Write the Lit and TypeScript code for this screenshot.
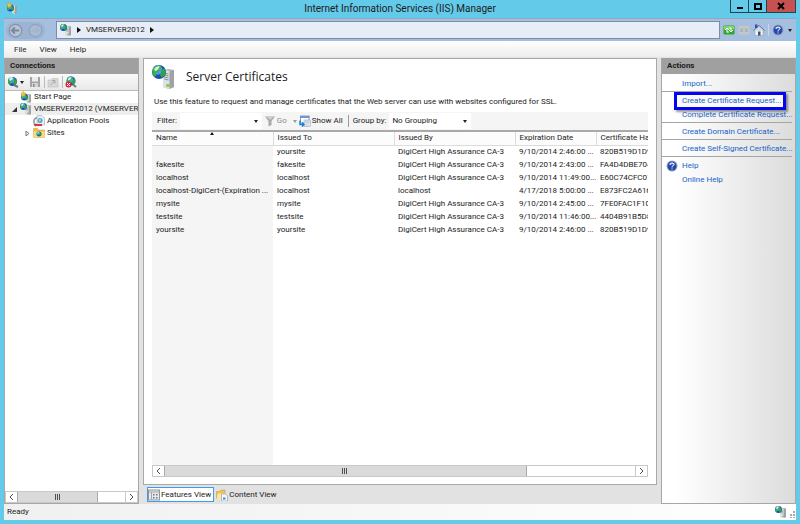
import { LitElement, html, css, svg, nothing } from "lit";
import { customElement, property, state } from "lit/decorators.js";
import { classMap } from "lit/directives/class-map.js";

const globe = (x: number, y: number, r: number) => svg`
  <g transform="translate(${x} ${y}) scale(${r / 10})">
    <circle r="10" fill="#1c4fb4"/>
    <circle cx="-2" cy="-3" r="7" fill="#4f98ea"/>
    <path d="M-9 -3C-7 -8 -2 -10 2 -9L4 -6L0 -4L-1 0L-5 1L-4 5L-6 7C-9 4 -10 0 -9 -3Z" fill="#35b53c"/>
    <path d="M3 -3L8 -5C10 -2 10 2 8 5L4 8L1 4L4 1Z" fill="#2fa63a"/>
    <path d="M-7 -4C-5 -8 -1 -9 1 -8L-1 -4L-5 -1Z" fill="#d9f7d2"/>
  </g>`;
const server = (x: number, y: number, w: number, h: number) => svg`
  <g transform="translate(${x} ${y}) scale(${w / 10} ${h / 20})">
    <path d="M0 1L5 0L10 1V18L5 20L0 18Z" fill="#b4babe"/>
    <path d="M0 1L6 2V20L0 18Z" fill="#dfe2e4"/>
    <path d="M6 2L10 1V18L6 20Z" fill="#9da3a8"/>
    <path d="M1 4L5 5M1 6L5 7M1 8L5 9M1 10L5 11" stroke="#8b9399" stroke-width="1"/>
    <rect x="3" y="15" width="3" height="3" fill="#8fc850"/>
  </g>`;
const star = svg`<path d="M5 0L6.500 3L10 3.500L7.500 6L8 9.500L5 8L2 9.500L2.500 6L0 3.500L3.500 3Z" fill="#f5c431" stroke="#c98a12" stroke-width=".5"/>`;

const icons: Record<string, unknown> = {
  iis: svg`${server(11, 4, 11, 20)}${globe(7, 7, 7)}`,
  start: svg`${server(12, 6, 10, 18)}${globe(9, 12, 7)}<g transform="translate(1 0) scale(1.1)">${star}</g>`,
  connect: svg`${globe(11, 11, 9)}<path d="M14 18L22 22" stroke="#6c7a86" stroke-width="4"/><circle cx="8" cy="5" r="3" fill="#d6ecff"/>`,
  save: svg`<path d="M2 2H22V22H2Z" fill="#a4a4a4"/><rect x="6" y="2" width="12" height="9" fill="#ececec"/><rect x="6" y="14" width="12" height="8" fill="#d4d4d4"/><rect x="8" y="16" width="3" height="6" fill="#8a8a8a"/>`,
  up: svg`<path d="M2 8H9L11 5H22V22H2Z" fill="#d9d9d9" stroke="#b3b3b3"/><path d="M7 18L15 10M10 9H16V15" stroke="#a5a5a5" stroke-width="2" fill="none"/>`,
  remove: svg`${globe(12, 10, 9)}<path d="M16 17L22 22" stroke="#6c7a86" stroke-width="4"/><circle cx="7" cy="17" r="6" fill="#d8262c"/><path d="M4 14L10 20M10 14L4 20" stroke="#fff" stroke-width="2"/>`,
  pools: svg`<path d="M8 1H18L23 6V20H8Z" fill="#e6eef8" stroke="#8d9aa8"/><circle cx="14" cy="11" r="5" fill="#4fa3dc"/><path d="M11 9L15 7L16 11L13 14Z" fill="#b7e08a"/><path d="M8 5A8 8 0 0 0 3 17" stroke="#8f979e" stroke-width="3" fill="none"/><path d="M1 19L5 16V18H18V22H5V24Z" fill="#d33a32"/>`,
  sites: svg`<path d="M1 3H9L11 6H23V21H1Z" fill="#e9bd52" stroke="#c99a32"/><path d="M1 9H23V21H1Z" fill="#f8dc86"/>${globe(12, 14, 5)}`,
  back: svg`<circle cx="12" cy="12" r="10" fill="#b6c5da" stroke="#8494aa" stroke-width="2"/><path d="M18 12H7M11 7L6 12L11 17" stroke="#7d8897" stroke-width="3" fill="none"/>`,
  forward: svg`<circle cx="12" cy="12" r="10" fill="#a9bbd4" stroke="#8fa3c0" stroke-width="2"/><path d="M6 12H17M13 8L17 12L13 16" stroke="#a3b4cc" stroke-width="2" fill="none"/>`,
  refresh: svg`<rect x="1" y="3" width="22" height="18" rx="2" fill="#2fa62c"/><rect x="2" y="4" width="20" height="7" fill="#7ad765"/><path d="M8 17V9M4 12L8 8L12 12M8 16H12M16 8V16M12 12L16 16L20 12M12 8H16" stroke="#fff" stroke-width="2" fill="none"/>`,
  stop: svg`<rect x="1" y="4" width="22" height="17" rx="2" fill="#c3c8ce"/><path d="M4 9L10 16M10 9L4 16M14 9L20 16M20 9L14 16" stroke="#9da4ac" stroke-width="2"/>`,
  home: svg`<path d="M4 12H20V23H4Z" fill="#f1f4f8" stroke="#8795a6"/><path d="M1 13L12 3L23 13" fill="#cfd9e6" stroke="#5f7187" stroke-width="2"/><path d="M4 1H9V8H4Z" fill="#2b4fc0"/><rect x="10" y="15" width="5" height="8" fill="#41536a"/>`,
  help: svg`<circle cx="12" cy="12" r="11" fill="#9aa3b5"/><circle cx="12" cy="12" r="9" fill="#2448ae"/><path d="M5 9A8 8 0 0 1 19 9Z" fill="#6d8fe0"/><path d="M8 10Q8 6 12 6Q16 6 16 9Q16 11 12 13V15M12 17V19" stroke="#fff" stroke-width="2" fill="none"/>`,
  funnel: svg`<path d="M2 3H22L15 12V20L9 23V12Z" fill="#a9a9a9"/><path d="M5 4H18L13 10Z" fill="#cfcfcf"/>`,
  showall: svg`<rect x="3" y="2" width="17" height="14" fill="#fff" stroke="#8a9cb8" stroke-width="2"/><path d="M2 4H21" stroke="#6f97d0" stroke-width="4"/><rect x="10" y="10" width="13" height="13" fill="#e8eef6" stroke="#8a9cb8"/><path d="M14 10V23M18 10V23M10 14H23" stroke="#9db0ca"/><path d="M2 11V19H9M6 15L10 19L6 23" stroke="#1f80cf" stroke-width="3" fill="none"/>`,
  features: svg`<rect x="1" y="2" width="22" height="20" fill="#e9e9e9" stroke="#8f969c" stroke-width="2"/><path d="M2 6H22M7 6V21" stroke="#a0a7ad" stroke-width="2"/><path d="M10 10H13V13H10ZM16 10H19V13H16ZM10 16H13V19H10ZM16 16H19V19H16Z" fill="#6b7680"/>`,
  content: svg`<path d="M1 5H8L10 2H18V19H1Z" fill="#efc45a" stroke="#c2923a"/><path d="M4 9H20L16 20H1Z" fill="#fbe7a4"/><path d="M11 10H19L23 14V24H11Z" fill="#f4f8fd" stroke="#6487b5"/><path d="M14 17H19V21H14Z" fill="#4c86d0"/>`,
};

@customElement("iis-icon")
class IisIcon extends LitElement {
  static styles = css`
    :host { display: inline-flex; flex: none; width: 12px; height: 12px; }
    svg { width: 100%; height: 100%; }
  `;
  @property() name = "iis";
  render() {
    return html`<svg viewBox="0 0 24 24" aria-hidden="true">${icons[this.name]}</svg>`;
  }
}

@customElement("scroll-strip")
class ScrollStrip extends LitElement {
  static styles = css`
    :host { display: flex; height: 12px; border: 1px solid #c9c9c9; box-sizing: border-box; background: #fff; }
    button { flex: none; width: 11px; padding: 0; border: 0; background: #fff; display: grid; place-items: center; }
    svg { width: 5px; height: 8px; fill: none; stroke: #505050; }
    .track { flex: 1; display: flex; border-right: 1px solid #c9c9c9; }
    .thumb { display: grid; place-items: center; box-sizing: border-box; background: #dadada; border: solid #a9a9a9; border-width: 0 1px; }
    .thumb svg { width: 6px; height: 6px; }
  `;
  @property({ type: Number }) size = 75;
  render() {
    return html`
      <button aria-label="Scroll left"><svg viewBox="0 0 5 8"><path d="M4 1L1 4L4 7"/></svg></button>
      <div class="track"><div class="thumb" style="width:${this.size}%">
        <svg viewBox="0 0 6 6"><path d="M.5 0V6M2.500 0V6M4.500 0V6"/></svg>
      </div></div>
      <button aria-label="Scroll right"><svg viewBox="0 0 5 8"><path d="M1 1L4 4L1 7"/></svg></button>`;
  }
}

const CA = "DigiCert High Assurance CA-3";
const rows = [
  ["", "yoursite", CA, "9/10/2014 2:46:00 ...", "820B519D1D9"],
  ["fakesite", "fakesite", CA, "9/10/2014 2:43:00 ...", "FA4D4DBE704"],
  ["localhost", "localhost", CA, "9/10/2014 11:49:00...", "E60C74CFC01"],
  ["localhost-DigiCert-(Expiration ...", "localhost", "localhost", "4/17/2018 5:00:00 ...", "E873FC2A616"],
  ["mysite", "mysite", CA, "9/10/2014 2:45:00 ...", "7FE0FAC1F10"],
  ["testsite", "testsite", CA, "9/10/2014 11:46:00...", "4404B91B5D8"],
  ["yoursite", "yoursite", CA, "9/10/2014 2:46:00 ...", "820B519D1D9"],
];
const columns = ["Name", "Issued To", "Issued By", "Expiration Date", "Certificate Ha"];
const actions = [
  ["Import..."],
  ["Create Certificate Request...", "Complete Certificate Request..."],
  ["Create Domain Certificate..."],
  ["Create Self-Signed Certificate..."],
  ["Help", "Online Help"],
];
const caret = html`<span class="caret"></span>`;

@customElement("app-root")
class AppRoot extends LitElement {
  static styles = css`
    :host {
      display: flex; flex-direction: column; min-height: 100vh; box-sizing: border-box;
      padding: 0 4px 4px; background: #64caea; color: #1c1c1c;
      font: 8px/12px Roboto, "Open Sans", sans-serif;
    }
    button, input, select { font: inherit; color: inherit; border: 0; padding: 0; margin: 0; background: none; border-radius: 0; }
    ul { list-style: none; margin: 0; padding: 0; }
    .caret { flex: none; border: 2px solid transparent; border-top: 3px solid #222; border-bottom: 0; }
    .caret.side { border: 3px solid transparent; border-left: 4px solid #111; border-right: 0; }
    .caret.off { border-top-color: #999; }

    .titlebar { display: grid; grid-template-columns: 1fr auto 1fr; height: 18px; }
    .titlebar iis-icon { margin: 2px; }
    .titlebar h1 { margin: 0; font-size: 10px; line-height: 17px; font-weight: 400; }
    .winbtns { justify-self: end; display: flex; height: 13px; border: 1px solid #24434e; border-top: 0; box-sizing: border-box; }
    .winbtns button { width: 18px; display: grid; place-items: center; border-right: 1px solid #24434e; }
    .winbtns .close { width: 28px; background: #c75050; border: 0; }
    .winbtns svg { width: 8px; height: 8px; fill: none; stroke: #000; stroke-width: 2; }

    .address { display: flex; align-items: center; height: 23px; box-sizing: border-box; background: #a7bfdf; border-top: 1px solid #8fa8c0; padding-right: 4px; }
    .nav { display: flex; gap: 5px; padding: 0 2px; margin: 0 11px 0 2px; background: #9db3d2; border-radius: 9px; }
    .nav button { width: 15px; height: 17px; display: grid; place-items: center; }
    .nav iis-icon { width: 15px; height: 15px; }
    .crumbs { flex: 1; display: flex; align-items: center; gap: 5px; height: 16px; padding-left: 3px; background: #e6edf6; border: 1px solid #7c8ca4; }
    .tools { display: flex; align-items: center; gap: 3px; padding-left: 3px; }
    .tools button { display: flex; align-items: center; gap: 4px; }
    .tools button:last-child { border-left: 1px solid #c8d6ea; padding-left: 3px; }

    .menu { display: flex; gap: 13px; height: 16px; padding: 0 10px; background: linear-gradient(#fff, #ededed); }
    .menu button { line-height: 15px; }

    .body { flex: 1; display: grid; grid-template-columns: minmax(0, 135fr) minmax(0, 514fr) minmax(0, 135fr); gap: 4px; background: #e2e2e2; padding-top: 1px; }
    h2 { margin: 0; font-size: 8px; font-weight: 700; line-height: 16px; padding-left: 5px; background: #a0a0a0; }
    .panel { display: flex; flex-direction: column; box-sizing: border-box; border: 1px solid #a6a6a6; border-top: 0; background: #fff; overflow: hidden; }
    .conn-tools { display: flex; align-items: center; height: 16px; background: linear-gradient(#fafafa, #e8e8e8); border-bottom: 1px solid #bbb; }
    .conn-tools button { display: flex; align-items: center; gap: 1px; padding: 0 3px 0 2px; }
    .conn-tools button:nth-child(n + 3) { border-left: 1px solid #bbb; }
    .tree { flex: 1; }
    .node { display: flex; align-items: center; gap: 2px; white-space: nowrap; padding-left: 5px; height: 12px; }
    .node.child { padding-left: 18px; }
    .node.selected { background: #eeeeee; }
    .twist { width: 8px; flex: none; display: grid; place-items: center; }
    .twist svg { width: 5px; height: 5px; }

    .center { display: flex; flex-direction: column; }
    .page { flex: 1; display: flex; flex-direction: column; padding: 6px 8px 7px; border: 1px solid #a9a9a9; background: #fff; }
    .head { display: flex; align-items: center; gap: 10px; height: 24px; }
    .head iis-icon { width: 24px; height: 24px; }
    .head h3 { margin: 0; font: 400 12px/20px "Open Sans", sans-serif; }
    .page p { margin: 7px 0 4px; padding-left: 2px; line-height: 12px; }
    .filter { display: flex; align-items: center; height: 18px; background: #f5f5f5; border-bottom: 2px solid #a9a9a9; padding-left: 5px; white-space: nowrap; }
    .filter .combo { display: flex; align-items: center; background: #fff; height: 16px; width: 82px; margin-left: 3px; padding-right: 4px; box-sizing: border-box; }
    .combo input { flex: 1; min-width: 0; }
    .combo select { appearance: none; flex: 1; outline: 0; padding-left: 3px; }
    .filter button { display: flex; align-items: center; gap: 1px; }
    .filter .go { color: #8b8b8b; margin: 0 2px; }
    .filter .go .caret { margin-left: 5px; }
    .filter .group { border-left: 1px solid #999; margin-left: 5px; padding-left: 4px; }
    .grid { flex: 1; display: flex; flex-direction: column; overflow: hidden; background: linear-gradient(90deg, #f5f5f5 121px, #fff 121px); }
    table { width: 100%; table-layout: fixed; border-collapse: collapse; }
    th, td { height: 13px; line-height: 11px; padding: 0 0 1px 4px; box-sizing: border-box; overflow: hidden; white-space: nowrap; text-align: left; font-weight: 400; }
    th { background: #fcfcfc; border: solid #dcdcdc; border-width: 0 1px 1px 0; }
    th:last-child { border-right: 0; }
    .c0, .c1, .c2 { width: 121px; }
    .c3 { width: 81px; }
    .sort { display: inline-block; vertical-align: top; margin-left: 33px; border: 2px solid transparent; border-bottom: 3px solid #111; border-top: 0; }
    .tabs { display: flex; gap: 1px; height: 19px; padding: 2px 4px 0; align-items: flex-start; box-sizing: border-box; }
    .tabs button { display: flex; align-items: center; gap: 1px; height: 15px; border: 1px solid transparent; padding: 0 2px 0 0; box-sizing: border-box; }
    .tabs .on { background: #fff; border-color: #3b9bef; }

    .actions { background: linear-gradient(90deg, #fff 10%, #dcdcdc); }
    .actions h2 { margin-bottom: 1px; }
    .actions ul { padding-top: 2px; margin-right: 3px; border-bottom: 1px solid #a5a5a5; }
    .actions ul:last-child { border: 0; }
    .actions li { display: flex; align-items: center; height: 14px; padding-left: 4px; gap: 4px; white-space: nowrap; }
    .slot { width: 12px; height: 12px; flex: none; }
    a { color: #1663c7; text-decoration: none; }
    .marked { position: relative; z-index: 1; }
    .marked::before { content: ""; position: absolute; z-index: -1; inset: -3px -5px -3px -8px; border: 3px solid #0505ef; background: #fbfbfb; box-shadow: 2px 2px 2px #0006; }

    .status { display: flex; align-items: center; justify-content: space-between; height: 16px; padding: 0 1px 0 3px; background: linear-gradient(90deg, #f0f0f0, #fff); }
    .status span { display: flex; align-items: center; gap: 1px; }
    .grip { width: 7px; height: 7px; fill: #aaa; align-self: flex-end; }
  `;

  @state() tab = "Features View";

  node(icon: string, label: string, twist: "" | "open" | "closed" = "", child = false, selected = false) {
    return html`<li role="treeitem" aria-selected=${selected} class=${classMap({ node: true, child, selected })}>
      <span class="twist">${twist
        ? html`<svg viewBox="0 0 5 5">${twist === "open"
            ? svg`<path d="M5 0V5H0Z" fill="#333"/>`
            : svg`<path d="M1 0L4 2.500L1 5Z" fill="#fff" stroke="#777"/>`}</svg>`
        : nothing}</span>
      <iis-icon name=${icon}></iis-icon>${label}</li>`;
  }

  render() {
    return html`
      <header class="titlebar">
        <iis-icon name="start"></iis-icon>
        <h1>Internet Information Services (IIS) Manager</h1>
        <div class="winbtns">
          <button aria-label="Minimize"><svg viewBox="0 0 8 8"><path d="M1 6H7"/></svg></button>
          <button aria-label="Maximize"><svg viewBox="0 0 8 8"><path d="M1 2H7V7H1Z"/></svg></button>
          <button class="close" aria-label="Close"><svg viewBox="0 0 8 8"><path d="M1 1L7 7M7 1L1 7"/></svg></button>
        </div>
      </header>
      <nav class="address">
        <div class="nav">
          <button aria-label="Back"><iis-icon name="back"></iis-icon></button>
          <button aria-label="Forward"><iis-icon name="forward"></iis-icon></button>
        </div>
        <div class="crumbs"><iis-icon name="iis"></iis-icon><span class="caret side"></span>VMSERVER2012<span class="caret side"></span></div>
        <div class="tools">
          <button aria-label="Refresh"><iis-icon name="refresh"></iis-icon></button>
          <button aria-label="Stop"><iis-icon name="stop"></iis-icon></button>
          <button aria-label="Home"><iis-icon name="home"></iis-icon></button>
          <button aria-label="Help"><iis-icon name="help"></iis-icon>${caret}</button>
        </div>
      </nav>
      <div class="menu"><button>File</button><button>View</button><button>Help</button></div>
      <main class="body">
        <section class="panel">
          <h2>Connections</h2>
          <div class="conn-tools">
            <button aria-label="Connect"><iis-icon name="connect"></iis-icon>${caret}</button>
            <button aria-label="Save"><iis-icon name="save"></iis-icon></button>
            <button aria-label="Up"><iis-icon name="up"></iis-icon></button>
            <button aria-label="Remove"><iis-icon name="remove"></iis-icon></button>
          </div>
          <ul class="tree" role="tree">
            ${this.node("start", "Start Page")}
            ${this.node("iis", "VMSERVER2012 (VMSERVER20", "open", false, true)}
            ${this.node("pools", "Application Pools", "", true)}
            ${this.node("sites", "Sites", "closed", true)}
          </ul>
          <scroll-strip size="75"></scroll-strip>
        </section>
        <section class="center">
          <div class="page">
            <div class="head"><iis-icon name="iis"></iis-icon><h3>Server Certificates</h3></div>
            <p>Use this feature to request and manage certificates that the Web server can use with websites configured for SSL.</p>
            <div class="filter">
              <label for="filter">Filter:</label>
              <span class="combo"><input id="filter" />${caret}</span>
              <button class="go"><iis-icon name="funnel"></iis-icon>Go<span class="caret off"></span></button>
              <button><iis-icon name="showall"></iis-icon>Show All</button>
              <label class="group" for="group">Group by:</label>
              <span class="combo"><select id="group"><option>No Grouping</option></select>${caret}</span>
            </div>
            <div class="grid">
              <table>
                <thead><tr>${columns.map((c, i) => html`<th class="c${i}">${c}${i ? nothing : html`<span class="sort"></span>`}</th>`)}</tr></thead>
                <tbody>${rows.map((r) => html`<tr>${r.map((c) => html`<td>${c}</td>`)}</tr>`)}</tbody>
              </table>
            </div>
            <scroll-strip size="77"></scroll-strip>
          </div>
          <div class="tabs">
            ${[["features", "Features View"], ["content", "Content View"]].map(([icon, label]) => html`
              <button class=${classMap({ on: this.tab === label })} @click=${() => (this.tab = label)}>
                <iis-icon name=${icon}></iis-icon>${label}</button>`)}
          </div>
        </section>
        <aside class="panel actions">
          <h2>Actions</h2>
          ${actions.map((g) => html`<ul>${g.map((a) => html`<li>
            ${a === "Help" ? html`<iis-icon name="help"></iis-icon>` : html`<span class="slot"></span>`}
            <a href="#" class=${classMap({ marked: a.startsWith("Create Certificate") })}>${a}</a></li>`)}</ul>`)}
        </aside>
      </main>
      <footer class="status">Ready<span><iis-icon name="iis"></iis-icon>
        <svg class="grip" viewBox="0 0 7 7"><path d="M5 0h2v2H5zM5 3h2v2H5zM2 3h2v2H2zM5 6h2v1H5zM2 6h2v1H2z"/></svg></span></footer>
    `;
  }
}
